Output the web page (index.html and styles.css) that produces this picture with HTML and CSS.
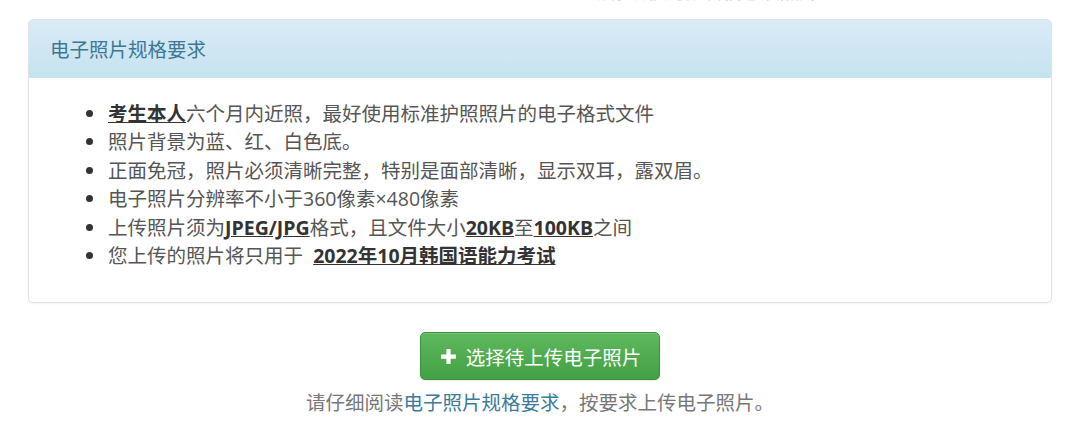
FILE: index.html
```html
<!DOCTYPE html>
<html lang="zh">
<head>
<meta charset="utf-8">
<link rel="stylesheet" href="styles.css">
</head>
<body>
<div class="cut"><span>请仔细核对报名信息及照片</span></div>
<div class="panel">
  <div class="panel-heading">电子照片规格要求</div>
  <div class="panel-body">
    <ul class="rules">
      <li><b>考生本人</b>六个月内近照，最好使用标准护照照片的电子格式文件</li>
      <li>照片背景为蓝、红、白色底。</li>
      <li>正面免冠，照片必须清晰完整，特别是面部清晰，显示双耳，露双眉。</li>
      <li>电子照片分辨率不小于360像素×480像素</li>
      <li>上传照片须为<b>JPEG/JPG</b>格式，且文件大小<b>20KB</b>至<b>100KB</b>之间</li>
      <li>您上传的照片将只用于&nbsp; <b>2022年10月韩国语能力考试</b></li>
    </ul>
  </div>
</div>
<div class="actions">
  <button class="btn-upload" type="button"><svg class="plus" viewBox="0 0 16 16" width="16" height="16"><path d="M6 1h4v5h5v4h-5v5H6v-5H1V6h5z" fill="#fff"/></svg><span>选择待上传电子照片</span></button>
  <p class="hint">请仔细阅读<span class="link">电子照片规格要求</span>，按要求上传电子照片。</p>
</div>
</body>
</html>
```
FILE: styles.css
```css
html, body {
  margin: 0;
  padding: 0;
  background: #fff;
}
body {
  font-family: "Open Sans", "Noto Sans CJK SC", sans-serif;
  font-size: 19.5px;
  color: #555;
}
.cut {
  height: 5px;
  overflow: hidden;
  padding-left: 590px;
}
.cut span {
  display: block;
  margin-top: -21px;
  line-height: 26px;
  font-size: 19px;
  color: #c4c4c4;
}
.panel {
  margin: 14px 28px 0 28px;
  border: 1px solid #dde3e6;
  border-radius: 5px;
  box-shadow: 0 1px 2px rgba(0,0,0,0.05);
  overflow: hidden;
}
.panel-heading {
  height: 58px;
  box-sizing: border-box;
  padding: 15px 21px 0;
  line-height: 28px;
  font-family: "Noto Sans CJK SC", sans-serif;
  font-size: 19.5px;
  color: #3d7796;
  background: linear-gradient(to bottom, #d9ebf7 0%, #c5e3ef 100%);
  border-bottom: 1px solid #c6e4ef;
}
.panel-body {
  padding: 22px 20px 20px;
}
.rules {
  margin: 0 0 12px 0;
  padding-left: 58px;
  line-height: 28.4px;
  color: #555;
}
.rules li {
  padding-left: 1px;
}
.rules li::marker {
  color: #333;
}
.rules b {
  color: #333;
  text-decoration: underline;
  font-weight: 700;
}
.actions {
  display: flex;
  flex-direction: column;
  align-items: center;
  padding-top: 29px;
}
.btn-upload {
  display: flex;
  align-items: center;
  gap: 9px;
  height: 48px;
  padding: 0 18px 0 19px;
  border: 1px solid #3e8f3e;
  border-radius: 5px;
  background: linear-gradient(to bottom, #5fb95e 0%, #43a044 100%);
  box-shadow: inset 0 1px 0 rgba(255,255,255,0.15), 0 1px 1px rgba(0,0,0,0.08);
  color: #fff;
  font-family: "Open Sans", "Noto Sans CJK SC", sans-serif;
  font-size: 19.5px;
  cursor: pointer;
}
.plus {
  display: block;
  width: 17px;
  height: 17px;
}
.hint {
  margin: 9px 0 0;
  line-height: 28px;
  color: #777;
}
.link {
  color: #3b7a9b;
}
```
